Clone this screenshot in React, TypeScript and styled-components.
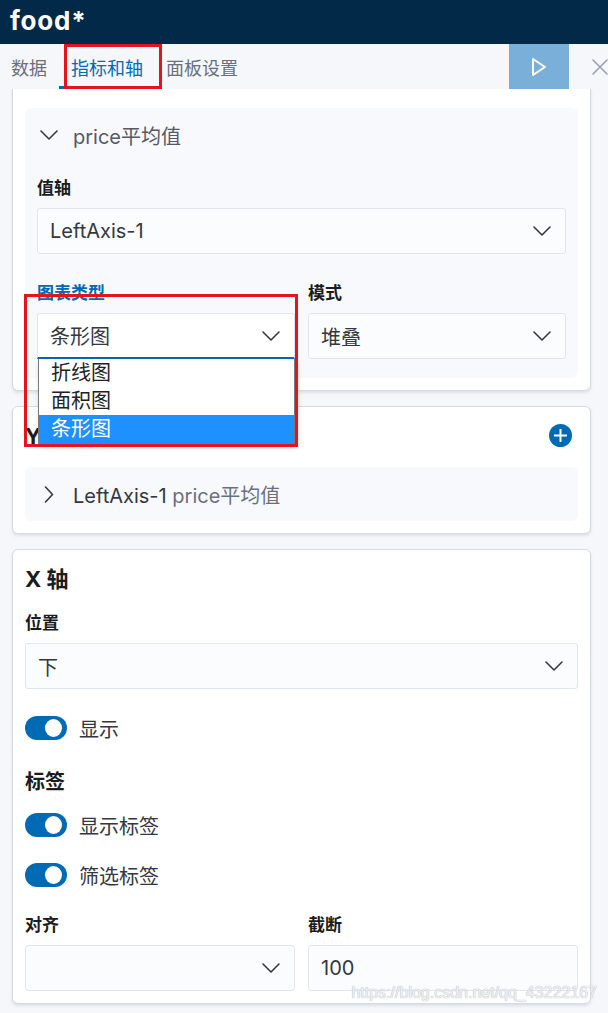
import React from "react";
import styled, { createGlobalStyle } from "styled-components";

const GlobalStyle = createGlobalStyle`
  html, body {
    margin: 0;
    padding: 0;
  }
  body {
    font-family: Inter, "Noto Sans CJK SC", sans-serif;
    background: #f5f7fa;
    color: #343741;
  }
  * {
    box-sizing: border-box;
  }
`;

const ChevronDown = ({ w = 18 }: { w?: number }) => (
  <svg width={w} height="10" viewBox="0 0 18 10" fill="none">
    <path d="M1 1 L9 9 L17 1" stroke="#343741" strokeWidth="1.6" strokeLinecap="round" strokeLinejoin="round" />
  </svg>
);

const ChevronRight = () => (
  <svg width="10" height="17" viewBox="0 0 10 17" fill="none">
    <path d="M1.5 1 L8.5 8.5 L1.5 16" stroke="#343741" strokeWidth="1.6" strokeLinecap="round" strokeLinejoin="round" />
  </svg>
);

const PlayIcon = () => (
  <svg width="16" height="20" viewBox="0 0 16 20" fill="none">
    <path d="M2 2 L14 10 L2 18 Z" stroke="#fff" strokeWidth="2" strokeLinejoin="round" />
  </svg>
);

const CloseIcon = () => (
  <svg width="16" height="16" viewBox="0 0 16 16" fill="none">
    <path d="M1 1 L15 15 M15 1 L1 15" stroke="#98a2b3" strokeWidth="1.6" strokeLinecap="round" />
  </svg>
);

const PlusIcon = () => (
  <svg width="23" height="23" viewBox="0 0 23 23">
    <circle cx="11.5" cy="11.5" r="11.5" fill="#006bb4" />
    <path d="M11.5 5 V18 M5 11.5 H18" stroke="#fff" strokeWidth="2" />
  </svg>
);

const Select = ({ value, focused }: { value: string; focused?: boolean }) => (
  <SelectBox focused={focused}>
    <SelectValue>{value}</SelectValue>
    <ChevronDown />
  </SelectBox>
);

const Switch = ({ label }: { label: string }) => (
  <SwitchRow>
    <SwitchTrack>
      <SwitchKnob />
    </SwitchTrack>
    <SwitchLabel>{label}</SwitchLabel>
  </SwitchRow>
);

const App = () => {
  return (
    <Page>
      <GlobalStyle />
      <TopBar>
        <AppTitle>food*</AppTitle>
      </TopBar>
      <TabBar>
        <Tab>数据</Tab>
        <Tab active>指标和轴</Tab>
        <Tab>面板设置</Tab>
        <Spacer />
        <RunButton>
          <PlayIcon />
        </RunButton>
        <CloseButton>
          <CloseIcon />
        </CloseButton>
        <TabMark />
      </TabBar>

      <Scroll>
        <Card cut>
          <Accordion>
            <AccordionHeader>
              <ChevronSlot>
                <ChevronDown />
              </ChevronSlot>
              <AccordionText muted>price平均值</AccordionText>
            </AccordionHeader>
            <AccordionBody>
              <FieldLabel>值轴</FieldLabel>
              <Select value="LeftAxis-1" />
              <TwoCols gap={29}>
                <FieldCol>
                  <FieldLabel active>图表类型</FieldLabel>
                  <SelectWrap>
                    <Select value="条形图" focused />
                    <OptionList>
                      <OptionItem>折线图</OptionItem>
                      <OptionItem>面积图</OptionItem>
                      <OptionItem selected>条形图</OptionItem>
                    </OptionList>
                  </SelectWrap>
                  <ListMark />
                </FieldCol>
                <FieldCol>
                  <FieldLabel>模式</FieldLabel>
                  <Select value="堆叠" />
                </FieldCol>
              </TwoCols>
            </AccordionBody>
          </Accordion>
        </Card>

        <Card>
          <TitleRow>
            <CardTitle>Y 轴</CardTitle>
            <AddButton>
              <PlusIcon />
            </AddButton>
          </TitleRow>
          <Accordion spaced>
            <AccordionHeader>
              <ChevronSlot>
                <ChevronRight />
              </ChevronSlot>
              <AccordionText>
                LeftAxis-1 <Subdued>price平均值</Subdued>
              </AccordionText>
            </AccordionHeader>
          </Accordion>
        </Card>

        <Card>
          <TitleRow>
            <CardTitle>X 轴</CardTitle>
          </TitleRow>
          <FieldLabel top={15}>位置</FieldLabel>
          <Select value="下" />
          <SwitchGroup top={27}>
            <Switch label="显示" />
          </SwitchGroup>
          <SectionTitle>标签</SectionTitle>
          <SwitchGroup top={19}>
            <Switch label="显示标签" />
          </SwitchGroup>
          <SwitchGroup top={26}>
            <Switch label="筛选标签" />
          </SwitchGroup>
          <TwoCols gap={28}>
            <FieldCol>
              <FieldLabel>对齐</FieldLabel>
              <Select value="" />
            </FieldCol>
            <FieldCol>
              <FieldLabel>截断</FieldLabel>
              <InputBox>100</InputBox>
            </FieldCol>
          </TwoCols>
        </Card>
      </Scroll>

      <Watermark>https://blog.csdn.net/qq_43222167</Watermark>
    </Page>
  );
};

export default App;

const Page = styled.div`
  position: relative;
  width: 608px;
  height: 1013px;
  overflow: hidden;
  background: #f5f7fa;
`;

const TopBar = styled.div`
  height: 44px;
  background: #022a48;
  display: flex;
  align-items: center;
  padding-left: 10px;
`;

const AppTitle = styled.div`
  color: #fff;
  font-size: 26px;
  font-weight: 700;
  letter-spacing: 0.8px;
  margin-top: -4px;
`;

const TabBar = styled.div`
  position: relative;
  height: 45px;
  display: flex;
  align-items: stretch;
  background: #f5f7fa;
`;

const Tab = styled.div<{ active?: boolean }>`
  display: flex;
  align-items: center;
  padding: 0 12px 0 ${(p) => (p.active ? "12px" : "11px")};
  font-size: 18px;
  color: ${(p) => (p.active ? "#006bb4" : "#69707d")};
  border-bottom: 3px solid ${(p) => (p.active ? "#006bb4" : "transparent")};
  padding-top: 3px;
`;

const Spacer = styled.div`
  flex: 1;
`;

const RunButton = styled.div`
  width: 60px;
  background: #79afd9;
  display: flex;
  align-items: center;
  justify-content: center;
`;

const CloseButton = styled.div`
  width: 39px;
  display: flex;
  align-items: center;
  justify-content: flex-end;
`;

const TabMark = styled.div`
  position: absolute;
  left: 64px;
  top: 0;
  width: 98px;
  height: 45px;
  border: 3px solid #e5141c;
  pointer-events: none;
`;

const Scroll = styled.div`
  height: 924px;
  overflow: hidden;
  padding: 0 17px 0 12px;
`;

const Card = styled.div<{ cut?: boolean }>`
  background: #fff;
  border: 1px solid #d3dae6;
  border-radius: 6px;
  box-shadow: 0 2px 3px rgba(152, 162, 179, 0.25);
  padding: 12px;
  margin-top: 15px;
  ${(p) =>
    p.cut &&
    `
    margin-top: 0;
    border-top: none;
    border-top-left-radius: 0;
    border-top-right-radius: 0;
    padding-top: 19px;
  `}
`;

const TitleRow = styled.div`
  height: 36px;
  padding-bottom: 6px;
  display: flex;
  align-items: center;
  justify-content: space-between;
`;

const CardTitle = styled.div`
  font-size: 22px;
  font-weight: 700;
  color: #1a1c21;
`;

const AddButton = styled.div`
  display: flex;
  margin-right: 6px;
  margin-top: 2px;
`;

const Accordion = styled.div<{ spaced?: boolean }>`
  background: #f8f9fc;
  border-radius: 6px;
  margin-top: ${(p) => (p.spaced ? "12px" : "0")};
`;

const AccordionHeader = styled.div`
  height: 54px;
  display: flex;
  align-items: center;
  padding-left: 15px;
`;

const ChevronSlot = styled.div`
  width: 18px;
  display: flex;
  justify-content: center;
  margin-right: 15px;
`;

const AccordionText = styled.div<{ muted?: boolean }>`
  font-size: 20px;
  color: ${(p) => (p.muted ? "#535966" : "#343741")};
`;

const Subdued = styled.span`
  color: #69707d;
`;

const AccordionBody = styled.div`
  padding: 16px 12px 19px;
`;

const FieldLabel = styled.div<{ active?: boolean; top?: number }>`
  font-size: 17px;
  font-weight: 700;
  line-height: 20px;
  height: 20px;
  color: ${(p) => (p.active ? "#006bb4" : "#1a1c21")};
  margin-top: ${(p) => p.top ?? 0}px;
  margin-bottom: 10px;
`;

const TwoCols = styled.div<{ gap: number }>`
  display: grid;
  grid-template-columns: 1fr 1fr;
  column-gap: 13px;
  margin-top: ${(p) => p.gap}px;
`;

const FieldCol = styled.div`
  position: relative;
`;

const SelectWrap = styled.div`
  position: relative;
  z-index: 3;
`;

const SelectBox = styled.div<{ focused?: boolean }>`
  height: 46px;
  display: flex;
  align-items: center;
  justify-content: space-between;
  padding: 0 14px 0 12px;
  background: ${(p) => (p.focused ? "#fff" : "#fbfcfd")};
  border: 1px solid #e1e5ec;
  border-bottom: ${(p) => (p.focused ? "2px solid #006bb4" : "1px solid #e1e5ec")};
  border-radius: 3px;
  ${(p) => p.focused && "border-bottom-left-radius: 0; border-bottom-right-radius: 0;"}
`;

const SelectValue = styled.div`
  font-size: 20px;
  color: #343741;
`;

const InputBox = styled.div`
  height: 46px;
  display: flex;
  align-items: center;
  padding: 0 12px;
  background: #fbfcfd;
  border: 1px solid #e1e5ec;
  border-radius: 3px;
  font-size: 20px;
  color: #343741;
`;

const OptionList = styled.div`
  position: absolute;
  top: 100%;
  left: 1px;
  right: 0;
  background: #fff;
  border: 1px solid #7a7a7a;
  border-top: none;
  box-shadow: 2px 3px 6px rgba(0, 0, 0, 0.2);
`;

const OptionItem = styled.div<{ selected?: boolean }>`
  height: 28px;
  line-height: 28px;
  padding-left: 12px;
  font-size: 20px;
  color: ${(p) => (p.selected ? "#fff" : "#222")};
  background: ${(p) => (p.selected ? "#1e90ff" : "#fff")};
`;

const ListMark = styled.div`
  position: absolute;
  left: -13px;
  top: 11px;
  width: 274px;
  height: 153px;
  border: 3px solid #e5141c;
  z-index: 4;
  pointer-events: none;
`;

const SwitchGroup = styled.div<{ top: number }>`
  margin-top: ${(p) => p.top}px;
`;

const SwitchRow = styled.div`
  display: flex;
  align-items: center;
  height: 24px;
`;

const SwitchTrack = styled.div`
  width: 42px;
  height: 24px;
  border-radius: 12px;
  background: #006bb4;
  display: flex;
  align-items: center;
  justify-content: flex-end;
  padding-right: 5px;
`;

const SwitchKnob = styled.div`
  width: 17px;
  height: 18px;
  border-radius: 50%;
  background: #fff;
`;

const SwitchLabel = styled.div`
  margin-left: 12px;
  font-size: 20px;
  color: #343741;
`;

const SectionTitle = styled.div`
  margin-top: 30px;
  height: 24px;
  line-height: 24px;
  font-size: 20px;
  font-weight: 700;
  color: #1a1c21;
`;

const Watermark = styled.div`
  position: absolute;
  right: 11px;
  bottom: 11px;
  font-family: "Liberation Sans", Arial, sans-serif;
  font-size: 16px;
  color: #eef0f4;
  text-shadow: 0 0 1px #b8bec8, 0 0 1px #b8bec8;
  pointer-events: none;
`;
